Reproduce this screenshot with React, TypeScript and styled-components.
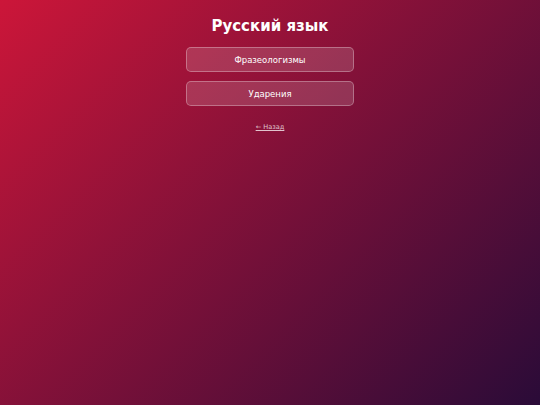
import React from 'react';
import styled, { createGlobalStyle } from 'styled-components';

const GlobalStyle = createGlobalStyle`
  html, body {
    margin: 0;
    padding: 0;
    height: 100%;
  }
  body {
    font-family: "DejaVu Sans", Verdana, sans-serif;
    background: linear-gradient(135deg, #cc1639 0%, #2a0b38 100%);
    background-attachment: fixed;
    min-height: 405px;
    color: #fff;
  }
`;

const Page = styled.div`
  display: flex;
  flex-direction: column;
  align-items: center;
  padding-top: 17px;
`;

const Title = styled.h1`
  margin: 0 0 12px;
  font-size: 15px;
  line-height: 18px;
  font-weight: bold;
  color: #fff;
`;

const Menu = styled.div`
  display: flex;
  flex-direction: column;
  gap: 9px;
  width: 168px;
`;

const MenuButton = styled.button`
  height: 25px;
  padding: 0;
  border-radius: 5px;
  border: 1px solid rgba(255, 255, 255, 0.3);
  background: rgba(255, 255, 255, 0.15);
  color: #fff;
  font-family: inherit;
  font-size: 8.5px;
  cursor: pointer;
`;

const BackLink = styled.a`
  margin-top: 17px;
  font-size: 6.6px;
  line-height: 8px;
  color: rgba(255, 255, 255, 0.75);
  text-decoration: underline;
`;

export default function App() {
  return (
    <>
      <GlobalStyle />
      <Page>
        <Title>Русский язык</Title>
        <Menu>
          <MenuButton>Фразеологизмы</MenuButton>
          <MenuButton>Ударения</MenuButton>
        </Menu>
        <BackLink href="#">← Назад</BackLink>
      </Page>
    </>
  );
}
